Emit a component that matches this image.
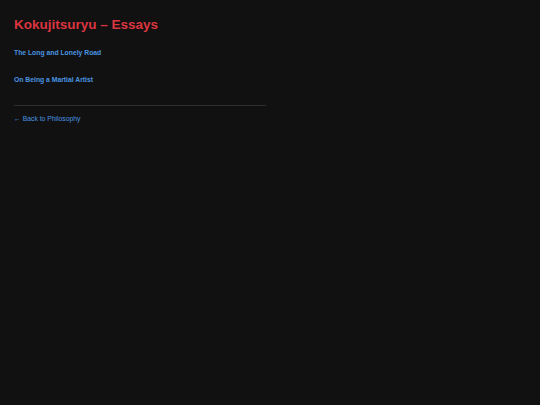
export default function App() {
  return (
    <div className="min-h-[405px] w-full bg-[#111111] px-[14px] pt-[16px]" style={{ fontFamily: '"Liberation Sans", Arial, sans-serif' }}>
      <div className="w-[252px]">
        <h1 className="text-[13.5px] font-bold leading-[18px] text-[#dc3540] whitespace-nowrap">Kokujitsuryu – Essays</h1>
        <div className="mt-[15px] text-[6.8px] font-bold leading-[8px] text-[#4a94e0]">The Long and Lonely Road</div>
        <div className="mt-[19px] text-[6.8px] font-bold leading-[8px] text-[#4a94e0]">On Being a Martial Artist</div>
        <div className="mt-[21px] h-px bg-[#2e2e2e]" />
        <div className="mt-[9px] text-[6.8px] leading-[8px] text-[#4a94e0]">← Back to Philosophy</div>
      </div>
    </div>
  );
}
